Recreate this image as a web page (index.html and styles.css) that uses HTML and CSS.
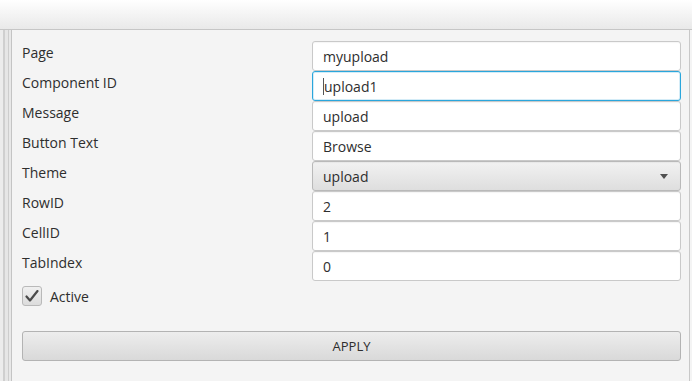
FILE: index.html
```html
<!DOCTYPE html>
<html lang="en">
<head>
    <meta charset="UTF-8">
    <title>Properties</title>
    <link rel="stylesheet" href="styles.css">
</head>
<body>
    <div class="titlebar"></div>

    <div class="workspace">
        <div class="side-strip"></div>

        <div class="props">
            <div class="prop-grid">
                <div class="prop-label">Page</div>
                <div class="field">myupload</div>

                <div class="prop-label">Component ID</div>
                <div class="field focused"><span class="caret"></span>upload1</div>

                <div class="prop-label">Message</div>
                <div class="field">upload</div>

                <div class="prop-label">Button Text</div>
                <div class="field">Browse</div>

                <div class="prop-label">Theme</div>
                <div class="combo">
                    <span>upload</span>
                    <span class="arrow"></span>
                </div>

                <div class="prop-label">RowID</div>
                <div class="field">2</div>

                <div class="prop-label">CellID</div>
                <div class="field">1</div>

                <div class="prop-label">TabIndex</div>
                <div class="field">0</div>
            </div>

            <div class="check-row">
                <span class="checkbox">
                    <svg width="14" height="12" viewBox="0 0 14 12">
                        <path d="M1.5 6.5 L5 10.5 L12.5 1" fill="none" stroke="#4a4a4a" stroke-width="2.2" stroke-linecap="round" stroke-linejoin="round"/>
                    </svg>
                </span>
                <span>Active</span>
            </div>

            <div class="apply">APPLY</div>
        </div>
    </div>
</body>
</html>
```

FILE: styles.css
```css
body {
    margin: 0;
    width: 692px;
    height: 381px;
    overflow: hidden;
    background-color: #f4f4f4;
    font-family: 'Open Sans', sans-serif;
    font-size: 14px;
    color: #2e2e2e;
}

.titlebar {
    height: 29px;
    background: linear-gradient(#ffffff, #f6f6f6 40%, #e9e9e9);
    border-bottom: 1px solid #c6c6c6;
}

.workspace {
    display: flex;
    height: 351px;
}

.side-strip {
    width: 12px;
    background: linear-gradient(to right,
        #ececec 0, #ececec 3px,
        #cfcfcf 3px, #cfcfcf 5px,
        #e6e6e6 5px, #e6e6e6 8px,
        #cdcdcd 8px, #cdcdcd 9px,
        #e8e8e8 9px, #e8e8e8 11px,
        #c4c4c4 11px, #c4c4c4 12px);
}

.props {
    width: 667px;
    padding: 11px 0 0 10px;
    border-right: 1px solid #c8c8c8;
}

.prop-grid {
    display: grid;
    grid-template-columns: 290px 369px;
    grid-auto-rows: 30px;
}

.prop-label {
    padding-top: 2px;
    line-height: 20px;
}

.field,
.combo {
    display: flex;
    align-items: center;
    box-sizing: border-box;
    height: 30px;
    padding: 0 10px;
    background-color: #ffffff;
    border: 1px solid #c9c9c9;
    border-radius: 3px;
    box-shadow: inset 0 1px 1px rgba(0, 0, 0, 0.04);
}

.field.focused {
    border-color: #2aa6dc;
    box-shadow: inset 0 0 0 1px #d4ecf7;
}

.caret {
    width: 1px;
    height: 17px;
    background-color: #555555;
}

.combo {
    justify-content: space-between;
    background: linear-gradient(#f2f2f2, #dedede);
    border-color: #b9b9b9;
}

.arrow {
    width: 0;
    height: 0;
    margin-right: 2px;
    border-left: 4px solid transparent;
    border-right: 4px solid transparent;
    border-top: 5px solid #4f4f4f;
}

.check-row {
    display: flex;
    align-items: center;
    gap: 8px;
    margin-top: 5px;
    height: 20px;
}

.checkbox {
    display: flex;
    align-items: center;
    justify-content: center;
    box-sizing: border-box;
    width: 20px;
    height: 20px;
    border: 1px solid #b9b9b9;
    border-radius: 3px;
    background: linear-gradient(#f0f0f0, #dcdcdc);
}

.apply {
    display: flex;
    align-items: center;
    justify-content: center;
    box-sizing: border-box;
    width: 659px;
    height: 30px;
    margin-top: 25px;
    border: 1px solid #b3b3b3;
    border-radius: 3px;
    background: linear-gradient(#ededed, #d9d9d9);
    font-size: 13px;
}
```
